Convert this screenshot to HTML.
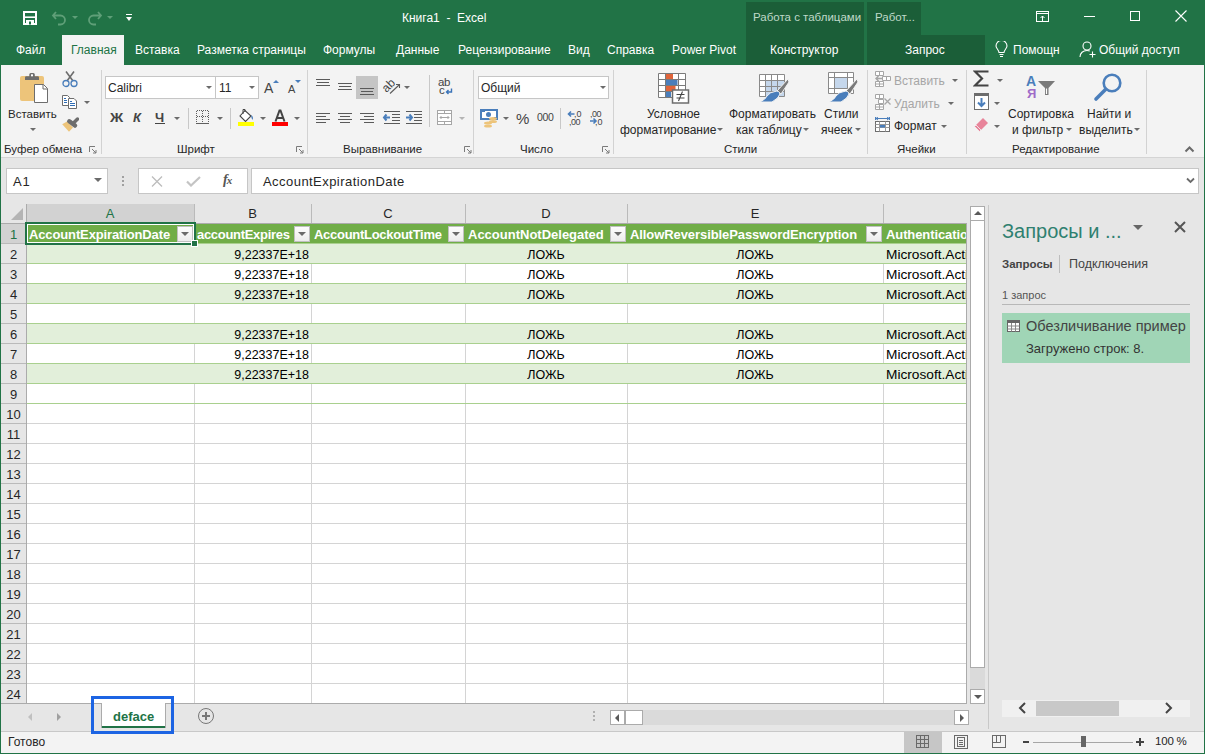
<!DOCTYPE html>
<html><head><meta charset="utf-8">
<style>
*{margin:0;padding:0;box-sizing:border-box}
html,body{width:1205px;height:754px;overflow:hidden;background:#e6e6e6;font-family:"Liberation Sans",sans-serif;position:relative;color:#262626}
.a{position:absolute}
.t{position:absolute;white-space:nowrap;line-height:1}
#title{left:0;top:0;width:1205px;height:65px;background:#217346}
.tab{position:absolute;top:43px;font-size:12px;color:#fff;white-space:nowrap;line-height:14px}
.ctx{position:absolute;background:#1b5e38}
#ribbon{left:1px;top:65px;width:1203px;height:93px;background:#f3f3f3;border-bottom:1px solid #d4d4d4}
#lb{left:0;top:0;width:1px;height:754px;background:#217346}
#rb{left:1204px;top:0;width:1px;height:754px;background:#217346}
#bb{left:0;top:753px;width:1205px;height:1px;background:#217346}
.sep{position:absolute;width:1px;background:#d2d2d2}
.gl{position:absolute;top:142px;font-size:11.5px;color:#262626;white-space:nowrap;line-height:14px}
.rt{position:absolute;font-size:12px;color:#262626;white-space:nowrap;line-height:14px}
.dd{position:absolute;width:0;height:0;border-left:3px solid transparent;border-right:3px solid transparent;border-top:3px solid #6b6b6b}
.box{position:absolute;background:#fff;border:1px solid #c6c6c6}
.hd{font-size:13px;font-weight:bold;color:#fff}
.cl{font-size:12.5px;color:#000}
.fb{position:absolute;width:16px;height:16px;background:linear-gradient(#fdfdfd,#ececec);border:1px solid #c0c0c0}
.fb i{position:absolute;left:3px;top:5px;width:0;height:0;border-left:4px solid transparent;border-right:4px solid transparent;border-top:4px solid #6a6a6a}
</style></head><body>
<div id="title" class="a"></div>
<!-- contextual tabs -->
<div class="ctx" style="left:746px;top:2px;width:118px;height:63px"></div>
<div class="ctx" style="left:867px;top:2px;width:54px;height:33px"></div>
<div class="ctx" style="left:867px;top:35px;width:118px;height:30px"></div>
<div class="t" style="left:753px;top:12px;font-size:11.5px;color:#bfd9c8">Работа с таблицами</div>
<div class="t" style="left:875px;top:12px;font-size:11.5px;color:#bfd9c8">Работ...</div>
<div class="t" style="left:402px;top:12px;font-size:12px;color:#fff">Книга1&nbsp; - &nbsp;Excel</div>
<!-- tabs -->
<div class="a" style="left:62px;top:35px;width:62px;height:30px;background:#f3f3f3"></div>
<div class="tab" style="left:16px">Файл</div>
<div class="tab" style="left:71px;color:#217346">Главная</div>
<div class="tab" style="left:135px">Вставка</div>
<div class="tab" style="left:197px">Разметка страницы</div>
<div class="tab" style="left:323px">Формулы</div>
<div class="tab" style="left:396px">Данные</div>
<div class="tab" style="left:458px">Рецензирование</div>
<div class="tab" style="left:568px">Вид</div>
<div class="tab" style="left:607px">Справка</div>
<div class="tab" style="left:672px">Power Pivot</div>
<div class="tab" style="left:770px">Конструктор</div>
<div class="tab" style="left:905px">Запрос</div>
<div class="tab" style="left:1013px">Помощн</div>
<div class="tab" style="left:1099px">Общий доступ</div>

<div id="ribbon" class="a"></div>
<!-- group separators -->
<div class="sep" style="left:101px;top:70px;height:84px"></div>
<div class="sep" style="left:307px;top:70px;height:84px"></div>
<div class="sep" style="left:473px;top:70px;height:84px"></div>
<div class="sep" style="left:613px;top:70px;height:84px"></div>
<div class="sep" style="left:867px;top:70px;height:84px"></div>
<div class="sep" style="left:966px;top:70px;height:84px"></div>
<div class="sep" style="left:1146px;top:70px;height:84px"></div>
<!-- group labels -->
<div class="gl" style="left:4px">Буфер обмена</div>
<div class="gl" style="left:177px">Шрифт</div>
<div class="gl" style="left:343px">Выравнивание</div>
<div class="gl" style="left:520px">Число</div>
<div class="gl" style="left:724px">Стили</div>
<div class="gl" style="left:897px">Ячейки</div>
<div class="gl" style="left:1012px">Редактирование</div>

<!-- ribbon controls text -->
<div class="rt" style="left:8px;top:107px;font-size:11.5px">Вставить</div>
<div class="box" style="left:105px;top:76px;width:154px;height:23px"></div>
<div class="a" style="left:215px;top:77px;width:1px;height:21px;background:#c6c6c6"></div>
<div class="rt" style="left:108px;top:81px;color:#262626">Calibri</div>
<div class="rt" style="left:219px;top:81px">11</div>
<div class="box" style="left:478px;top:76px;width:131px;height:23px"></div>
<div class="rt" style="left:481px;top:81px">Общий</div>
<div class="rt" style="left:647px;top:107px">Условное</div>
<div class="rt" style="left:620px;top:123px">форматирование</div>
<div class="rt" style="left:729px;top:107px">Форматировать</div>
<div class="rt" style="left:736px;top:123px">как таблицу</div>
<div class="rt" style="left:824px;top:107px">Стили</div>
<div class="rt" style="left:821px;top:123px">ячеек</div>
<div class="rt" style="left:894px;top:74px;color:#a6a6a6">Вставить</div>
<div class="rt" style="left:894px;top:97px;color:#a6a6a6">Удалить</div>
<div class="rt" style="left:894px;top:119px">Формат</div>
<div class="rt" style="left:1008px;top:107px">Сортировка</div>
<div class="rt" style="left:1012px;top:123px">и фильтр</div>
<div class="rt" style="left:1087px;top:107px">Найти и</div>
<div class="rt" style="left:1079px;top:123px">выделить</div>

<!-- formula bar -->
<div class="box" style="left:6px;top:168px;width:102px;height:26px"></div>
<div class="t" style="left:13px;top:175px;font-size:13px;color:#262626;letter-spacing:0.8px">A1</div>
<div class="box" style="left:138px;top:168px;width:110px;height:26px"></div>
<div class="box" style="left:251px;top:168px;width:948px;height:26px"></div>
<div class="t" style="left:263px;top:175px;font-size:13px;color:#262626;letter-spacing:0.45px">AccountExpirationDate</div>

<!--ICONS-->
<!-- QAT -->
<svg class="a" style="left:22px;top:10px" width="16" height="16"><rect x="2" y="2" width="12" height="12" fill="none" stroke="#fff" stroke-width="2"/><path d="M3 7.2H13" stroke="#fff" stroke-width="1.6"/><rect x="4" y="10" width="8" height="5" fill="#fff"/><rect x="7" y="11.5" width="2" height="3" fill="#217346"/></svg>
<svg class="a" style="left:51px;top:10px" width="17" height="16"><path d="M5 2L2 5.5L5 9M2.5 5.5H9.5A4.5 4.5 0 0 1 9.5 14.5H7" fill="none" stroke="#5f9f78" stroke-width="1.8"/></svg>
<div class="dd" style="left:72px;top:16px;border-top-color:#5f9f78"></div>
<svg class="a" style="left:86px;top:10px" width="17" height="16"><path d="M12 2L15 5.5L12 9M14.5 5.5H7.5A4.5 4.5 0 0 0 7.5 14.5H10" fill="none" stroke="#5f9f78" stroke-width="1.8"/></svg>
<div class="dd" style="left:107px;top:16px;border-top-color:#5f9f78"></div>
<div class="a" style="left:126px;top:14px;width:6px;height:1px;background:#fff"></div>
<div class="a" style="left:126px;top:17px;width:0;height:0;border-left:3px solid transparent;border-right:3px solid transparent;border-top:4px solid #fff"></div>
<!-- window buttons -->
<svg class="a" style="left:1035px;top:10px" width="16" height="13"><rect x="1.5" y="1.5" width="12" height="10" fill="none" stroke="#fff"/><path d="M1.5 3.5H13.5" stroke="#fff"/><path d="M7.5 11V6M5.5 8L7.5 6L9.5 8" fill="none" stroke="#fff"/></svg>
<div class="a" style="left:1084px;top:16px;width:11px;height:1px;background:#fff"></div>
<div class="a" style="left:1130px;top:11px;width:10px;height:10px;border:1px solid #fff"></div>
<svg class="a" style="left:1175px;top:10px" width="12" height="12"><path d="M0.5 0.5L11.5 11.5M11.5 0.5L0.5 11.5" stroke="#fff" stroke-width="1.1"/></svg>
<svg class="a" style="left:995px;top:41px" width="13" height="17"><path d="M4 11.5C4 9 1 7.5 1 5A5.5 5.5 0 0 1 12 5C12 7.5 9 9 9 11.5Z" fill="none" stroke="#fff" stroke-width="1.1"/><path d="M4.5 13.5H8.5M5 15.5H8" stroke="#fff" stroke-width="1.1"/></svg>
<svg class="a" style="left:1079px;top:41px" width="18" height="17"><circle cx="8" cy="5" r="4" fill="none" stroke="#fff" stroke-width="1.1"/><path d="M1 16C1 12 4 9.5 8 9.5C9 9.5 10 9.7 10.8 10" fill="none" stroke="#fff" stroke-width="1.1"/><path d="M13.5 10.5V16.5M10.5 13.5H16.5" stroke="#fff" stroke-width="1.1"/></svg>
<!-- clipboard group -->
<svg class="a" style="left:19px;top:72px" width="31" height="32">
<rect x="1" y="4" width="24" height="25" rx="2" fill="#edc47a"/>
<path d="M6 8V5.5Q6 4.3 7.2 4.3H10.3V2.5Q10.3 1 11.8 1H14.3Q15.8 1 15.8 2.5V4.3H18.8Q20 4.3 20 5.5V8Z" fill="#6d6d6d"/>
<rect x="12" y="2.3" width="2" height="2" fill="#fff"/>
<path d="M15.5 12.5H24.5L28.5 16.5V30.5H15.5Z" fill="#fff" stroke="#6d6d6d" stroke-width="1"/>
<path d="M24 12.5V17H28.5" fill="none" stroke="#6d6d6d"/>
</svg>
<div class="dd" style="left:30px;top:128px"></div>
<svg class="a" style="left:62px;top:70px" width="16" height="18"><path d="M4 1.5L11 11M12 1.5L5 11" stroke="#6d6d6d" stroke-width="1.6"/><circle cx="4" cy="13.5" r="3" fill="none" stroke="#4a7ebb" stroke-width="1.3"/><circle cx="12" cy="13.5" r="3" fill="none" stroke="#4a7ebb" stroke-width="1.3"/></svg>
<svg class="a" style="left:61px;top:94px" width="18" height="16"><path d="M1.5 1.5H6.5L8.5 3.5V11.5H1.5Z" fill="#fff" stroke="#6d6d6d"/><path d="M3 4.5H5M3 6.5H6M3 8.5H6" stroke="#2f6db5"/><path d="M7.5 4.5H13L15.5 7V14.5H7.5Z" fill="#fff" stroke="#6d6d6d"/><path d="M9 7.5H11M9 9.5H14M9 11.5H14" stroke="#2f6db5"/></svg>
<div class="dd" style="left:84px;top:101px"></div>
<svg class="a" style="left:62px;top:117px" width="17" height="16"><path d="M0.2 7.3L5 4.5L11 10.5L7 14.8Z" fill="#edc47a"/><path d="M7.3 4.3L13 8.5" stroke="#6d6d6d" stroke-width="4.5" stroke-linecap="round"/><path d="M12.5 5L15.5 2" stroke="#6d6d6d" stroke-width="3.5" stroke-linecap="round"/></svg>
<svg class="a" style="left:89px;top:146px" width="8" height="8"><path d="M0.5 6V0.5H6" fill="none" stroke="#7a7a7a"/><path d="M3 3L7 7M7 4V7H4" fill="none" stroke="#7a7a7a"/></svg>
<!-- font group -->
<div class="dd" style="left:206px;top:86px"></div>
<div class="dd" style="left:249px;top:86px"></div>
<div class="t" style="left:264px;top:81px;font-size:14px;color:#444">A</div>
<div class="a" style="left:273px;top:80px;width:0;height:0;border-left:3px solid transparent;border-right:3px solid transparent;border-bottom:3px solid #4a7ebb"></div>
<div class="t" style="left:288px;top:84px;font-size:11px;color:#444">A</div>
<div class="a" style="left:295px;top:80px;width:0;height:0;border-left:3px solid transparent;border-right:3px solid transparent;border-top:3px solid #4a7ebb"></div>
<div class="t" style="left:110px;top:111px;font-size:13.5px;font-weight:bold;color:#444;transform:scaleX(1.08);transform-origin:left">Ж</div>
<div class="t" style="left:133px;top:111px;font-size:13px;font-weight:bold;font-style:italic;color:#444">К</div>
<div class="t" style="left:155px;top:111px;font-size:13px;font-weight:bold;color:#444">Ч</div>
<div class="a" style="left:155px;top:123px;width:10px;height:1px;background:#444"></div>
<div class="dd" style="left:174px;top:117px"></div>
<div class="sep" style="left:188px;top:108px;height:21px;background:#c8c8c8"></div>
<svg class="a" style="left:196px;top:110px" width="14" height="15"><path d="M0.5 1V13M6.5 1V13M12.5 1V13M1 0.5H13M1 6.5H13" stroke="#5f5f5f" stroke-dasharray="1 1" fill="none"/><path d="M0 13.5H13" stroke="#5f5f5f"/></svg>
<div class="dd" style="left:217px;top:117px"></div>
<div class="sep" style="left:230px;top:108px;height:21px;background:#c8c8c8"></div>
<svg class="a" style="left:238px;top:108px" width="17" height="18"><path d="M7 2.5L2 8L7.5 13.5L13 8Z" fill="#fff" stroke="#444" stroke-width="1.1"/><path d="M5 6V1.5H7V4" fill="none" stroke="#444"/><path d="M13 7Q16 9 14.5 12L13.5 10Z" fill="#4a7ebb"/><rect x="0" y="14" width="16" height="4" fill="#ffff00"/></svg>
<div class="dd" style="left:260px;top:117px"></div>
<svg class="a" style="left:272px;top:108px" width="17" height="18"><path d="M3.5 13.5L7.5 2.5H8.5L12.5 13.5M5 10H11" fill="none" stroke="#444" stroke-width="2"/><rect x="0" y="14" width="16" height="4" fill="#ff0000"/></svg>
<div class="dd" style="left:294px;top:117px"></div>
<svg class="a" style="left:296px;top:146px" width="8" height="8"><path d="M0.5 6V0.5H6" fill="none" stroke="#7a7a7a"/><path d="M3 3L7 7M7 4V7H4" fill="none" stroke="#7a7a7a"/></svg>
<!-- alignment group -->
<svg class="a" style="left:310px;top:72px" width="160" height="60">
<g stroke="#5a5a5a" stroke-width="1" fill="none">
<path d="M6 7.5H20M7 10.5H19M6 13.5H20"/>
<path d="M28 11.5H42M29 14.5H41M28 17.5H42"/>
</g>
<rect x="46" y="4" width="22" height="23" fill="#c5c5c5"/>
<g stroke="#5a5a5a" stroke-width="1" fill="none">
<path d="M50 16.5H64M51 19.5H63M50 22.5H64"/>
<path d="M6 41.5H20M6 44.5H16M6 47.5H20M6 50.5H16"/>
<path d="M28 41.5H42M30 44.5H40M28 47.5H42M30 50.5H40"/>
<path d="M50 41.5H64M54 44.5H64M50 47.5H64M54 50.5H64"/>
<path d="M74 39.5H90M82 42.5H90M82 45.5H90M82 48.5H90M74 51.5H90"/>
<path d="M96 39.5H112M104 42.5H112M104 45.5H112M104 48.5H112M96 51.5H112"/>
<path d="M80 21.5L89 13" stroke-width="1.1"/>
</g>
<path d="M86 12.5L89.5 12.5L89.5 16" fill="none" stroke="#5a5a5a" stroke-width="1.1"/>
<path d="M74 45.5H80M76.5 42.5L74 45.5L76.5 48.5" stroke="#4a7ebb" stroke-width="2" fill="none"/>
<path d="M96 45.5H102M99.5 42.5L102 45.5L99.5 48.5" stroke="#4a7ebb" stroke-width="2" fill="none"/>
<g transform="translate(76.5,21) rotate(-45)"><text x="0" y="0" font-family="Liberation Sans" font-size="12" fill="#444">ab</text></g>
</svg>
<div class="dd" style="left:404px;top:86px"></div>
<div class="sep" style="left:429px;top:75px;height:52px;background:#c8c8c8"></div>
<div class="t" style="left:438px;top:77px;font-size:11.5px;color:#444;letter-spacing:-0.3px">ab</div>
<div class="t" style="left:439px;top:85px;font-size:11.5px;color:#444">c</div>
<svg class="a" style="left:445px;top:88px" width="8" height="7"><path d="M6.5 0.5V4H1.5M3.5 2L1.5 4L3.5 6" fill="none" stroke="#3a73b8" stroke-width="1.4"/></svg>
<svg class="a" style="left:437px;top:110px" width="16" height="16"><rect x="0.5" y="0.5" width="14" height="14" fill="#fff" stroke="#a6a6a6"/><path d="M0.5 3.5H14.5M0.5 11.5H14.5M7.5 0.5V3.5M7.5 11.5V14.5M3 7.5H12M4.5 6L3 7.5L4.5 9M10.5 6L12 7.5L10.5 9" fill="none" stroke="#a6a6a6"/></svg>
<div class="dd" style="left:459px;top:117px;border-top-color:#b4b4b4"></div>
<svg class="a" style="left:464px;top:146px" width="8" height="8"><path d="M0.5 6V0.5H6" fill="none" stroke="#7a7a7a"/><path d="M3 3L7 7M7 4V7H4" fill="none" stroke="#7a7a7a"/></svg>
<!-- number group -->
<div class="dd" style="left:600px;top:86px"></div>
<svg class="a" style="left:480px;top:109px" width="19" height="19"><rect x="1" y="1" width="16" height="9" fill="#fff" stroke="#4a7ebb" stroke-width="2"/><circle cx="8.5" cy="5.5" r="2.5" fill="#4a7ebb"/><path d="M2 2.5H5M14 8.5H16" stroke="#4a7ebb"/><ellipse cx="13" cy="9.5" rx="4" ry="1.6" fill="#edc47a"/><ellipse cx="13" cy="12.5" rx="4" ry="1.6" fill="#edc47a"/><ellipse cx="8" cy="14" rx="4" ry="1.6" fill="#edc47a"/><ellipse cx="8" cy="17" rx="4" ry="1.6" fill="#edc47a"/></svg>
<div class="dd" style="left:503px;top:117px"></div>
<div class="t" style="left:516px;top:111px;font-size:15px;color:#444">%</div>
<div class="t" style="left:537px;top:112px;font-size:10.5px;color:#444;letter-spacing:-0.3px">000</div>
<div class="sep" style="left:560px;top:108px;height:21px;background:#c8c8c8"></div>
<svg class="a" style="left:567px;top:109px" width="40" height="18"><path d="M1.5 5H7.5M4 2.5L1.5 5L4 7.5" fill="none" stroke="#4a7ebb" stroke-width="1.6"/><path d="M23 12H29M26.5 9.5L29 12L26.5 14.5" fill="none" stroke="#4a7ebb" stroke-width="1.6"/>
<text x="7" y="8" font-family="Liberation Sans" font-size="9" fill="#444">,0</text>
<text x="2" y="16" font-family="Liberation Sans" font-size="9" fill="#444" letter-spacing="-0.5">,00</text>
<text x="23" y="8" font-family="Liberation Sans" font-size="9" fill="#444" letter-spacing="-0.5">,00</text>
<text x="28" y="16" font-family="Liberation Sans" font-size="9" fill="#444">,0</text></svg>
<svg class="a" style="left:602px;top:146px" width="8" height="8"><path d="M0.5 6V0.5H6" fill="none" stroke="#7a7a7a"/><path d="M3 3L7 7M7 4V7H4" fill="none" stroke="#7a7a7a"/></svg>
<!-- styles group -->
<svg class="a" style="left:657px;top:72px" width="33" height="32">
<rect x="1.5" y="1.5" width="27" height="24" fill="#fff"/>
<rect x="9" y="2" width="7" height="5.5" fill="#e0643a"/>
<rect x="9" y="8" width="11.5" height="5.5" fill="#4a7ebb"/>
<rect x="9" y="14" width="9.5" height="5.5" fill="#e0643a"/>
<rect x="9" y="20" width="5" height="5.5" fill="#4a7ebb"/>
<path d="M1.5 1.5H28.5V25.5H1.5Z M8.5 1.5V25.5M21.5 1.5V25.5M1.5 7.5H28.5M1.5 13.5H28.5M1.5 19.5H28.5" fill="none" stroke="#7a7a7a"/>
<rect x="15.5" y="18" width="16" height="13" fill="#fff" stroke="#6d6d6d" stroke-width="1.5"/>
<path d="M19.5 22.5H27.5M19.5 26H27.5M25.5 19.5L21.5 29" stroke="#444" stroke-width="1.1"/>
</svg>
<svg class="a" style="left:758px;top:73px" width="32" height="31">
<rect x="1.5" y="1.5" width="25" height="22" fill="#fff"/>
<rect x="7" y="8" width="19.5" height="15.5" fill="#c5d7ec"/>
<path d="M1.5 1.5H26.5V23.5H1.5Z M7.5 1.5V23.5M13.5 1.5V23.5M19.5 1.5V23.5M1.5 7.5H26.5M1.5 13.5H26.5M1.5 18.5H26.5" fill="none" stroke="#8a8a8a"/>
<path d="M30 6L31 9L23 21L19 18Z" fill="#7a7a7a" stroke="#f3f3f3" stroke-width="1"/>
<path d="M17 18.5Q21 17 22 21Q21 25 14 29H2Q8 26 9 23Q12 19 17 18.5Z" fill="#4a7ebb" stroke="#f3f3f3" stroke-width="1"/>
</svg>
<svg class="a" style="left:827px;top:71px" width="32" height="33">
<rect x="1.5" y="1.5" width="25" height="21" fill="#fff"/>
<rect x="7.5" y="7" width="13" height="10" fill="#c5d7ec"/>
<path d="M1.5 1.5H26.5V22.5H1.5Z M7.5 1.5V22.5M20.5 1.5V22.5M1.5 6.5H26.5M1.5 17.5H26.5" fill="none" stroke="#8a8a8a"/>
<path d="M30 8L31 11L23 23L19 20Z" fill="#7a7a7a" stroke="#f3f3f3" stroke-width="1"/>
<path d="M17 20.5Q21 19 22 23Q21 27 14 31H2Q8 28 9 25Q12 21 17 20.5Z" fill="#4a7ebb" stroke="#f3f3f3" stroke-width="1"/>
</svg>
<div class="dd" style="left:717px;top:128px"></div>
<div class="dd" style="left:803px;top:128px"></div>
<div class="dd" style="left:855px;top:128px"></div>
<!-- cells group -->
<svg class="a" style="left:875px;top:71px" width="17" height="17"><g fill="#fff" stroke="#a6a6a6" stroke-width="1"><path d="M0.5 0.5H8.5V4.5H0.5ZM4.5 0.5V4.5"/><path d="M0.5 10.5H8.5V15.5H0.5ZM0.5 13H8.5M4.5 10.5V15.5"/><path d="M7.5 5.5H15.5V9.5H7.5ZM11.5 5.5V9.5"/></g><path d="M1 7.5H7M3.5 5L1 7.5L3.5 10" fill="none" stroke="#a6a6a6" stroke-width="1.5"/></svg>
<div class="dd" style="left:952px;top:79px;border-top-color:#6b6b6b"></div>
<svg class="a" style="left:875px;top:94px" width="17" height="17"><g fill="#fff" stroke="#a6a6a6" stroke-width="1"><path d="M0.5 0.5H8.5V4.5H0.5ZM4.5 0.5V4.5"/><path d="M0.5 10.5H8.5V15.5H0.5ZM0.5 13H8.5M4.5 10.5V15.5"/><path d="M3.5 5.5H8.5V9.5H3.5Z"/></g><path d="M9.5 4.5L15.5 10.5M15.5 4.5L9.5 10.5" stroke="#a6a6a6" stroke-width="1.3"/></svg>
<div class="dd" style="left:948px;top:102px;border-top-color:#6b6b6b"></div>
<svg class="a" style="left:875px;top:117px" width="16" height="16"><path d="M0.5 0V3M14.5 0V3M1 1.5H14M3 0L1 1.5L3 3M12 0L14 1.5L12 3" fill="none" stroke="#4a7ebb"/><rect x="0.5" y="4.5" width="14" height="10" fill="#fff" stroke="#6d6d6d"/><path d="M0.5 7.5H14.5M0.5 10.5H14.5M4.5 4.5V14.5M10.5 4.5V14.5" stroke="#9a9a9a"/><rect x="5" y="8" width="5" height="2.5" fill="#4a7ebb"/></svg>
<div class="dd" style="left:941px;top:125px"></div>
<!-- editing group -->
<svg class="a" style="left:973px;top:70px" width="17" height="17"><path d="M15.5 1.5H2L9 8.5L2 15.5H15.5" fill="none" stroke="#444" stroke-width="2.2"/></svg>
<div class="dd" style="left:997px;top:79px"></div>
<svg class="a" style="left:974px;top:93px" width="16" height="18"><rect x="0.5" y="0.5" width="14" height="16" fill="#fff" stroke="#6d6d6d"/><rect x="0" y="0" width="15" height="3" fill="#6d6d6d"/><path d="M7.5 5V13M4 9.5L7.5 13L11 9.5" fill="none" stroke="#4a7ebb" stroke-width="2"/></svg>
<div class="dd" style="left:994px;top:102px"></div>
<svg class="a" style="left:974px;top:117px" width="16" height="16"><path d="M9 1L14 6L7 13L2 8Z" fill="#e8849a"/><path d="M2 8L7 13L5.5 14.5L0.5 9.5Z" fill="#e8849a" stroke="#f3f3f3" stroke-width="0.8"/></svg>
<div class="dd" style="left:994px;top:125px"></div>
<div class="t" style="left:1026px;top:74px;font-size:14px;font-weight:bold;color:#4a7ebb">A</div>
<div class="t" style="left:1027px;top:87px;font-size:13px;font-weight:bold;color:#9f6bc8">Я</div>
<svg class="a" style="left:1037px;top:80px" width="20" height="17"><path d="M1 1H18L11.5 8V15H8V8Z" fill="#7a7a7a"/><path d="M9.5 8.5V14" stroke="#fff" stroke-width="1.2"/></svg>
<svg class="a" style="left:1093px;top:72px" width="31" height="30"><circle cx="19" cy="11" r="8.3" fill="none" stroke="#4a7ebb" stroke-width="2.6"/><path d="M12.5 17.5L3 27" stroke="#4a7ebb" stroke-width="3.6" stroke-linecap="round"/></svg>
<div class="dd" style="left:1066px;top:128px"></div>
<div class="dd" style="left:1134px;top:128px"></div>
<svg class="a" style="left:1184px;top:145px" width="12" height="8"><path d="M1.5 6.5L5.5 2.5L9.5 6.5" fill="none" stroke="#6a6a6a" stroke-width="2"/></svg>
<!-- formula bar icons -->
<div class="a" style="left:94px;top:178px;width:0;height:0;border-left:4px solid transparent;border-right:4px solid transparent;border-top:4px solid #6b6b6b"></div>
<div class="a" style="left:122px;top:176px;width:2px;height:2px;background:#a0a0a0;box-shadow:0 4px 0 #a0a0a0,0 8px 0 #a0a0a0"></div>
<svg class="a" style="left:151px;top:176px" width="12" height="11"><path d="M1 0.5L11 10.5M11 0.5L1 10.5" stroke="#bdbdbd" stroke-width="1.3"/></svg>
<svg class="a" style="left:186px;top:176px" width="15" height="11"><path d="M1 5.5L5 9.5L14 1" fill="none" stroke="#c4c4c4" stroke-width="2.2"/></svg>
<div class="t" style="left:223px;top:173px;font-family:'Liberation Serif',serif;font-style:italic;font-weight:bold;font-size:14px;color:#555">f<span style="font-size:11px;position:relative;left:-1px">x</span></div>
<svg class="a" style="left:1186px;top:177px" width="9" height="7"><path d="M1 1.5L4.5 5L8 1.5" fill="none" stroke="#6b6b6b" stroke-width="1.8"/></svg>

<!--/ICONS-->
<!--GRID-->
<div class="a" style="left:27px;top:224px;width:939px;height:479px;background:#fff;"></div>
<div class="a" style="left:27px;top:204px;width:167px;height:19px;background:#d2d2d2;"></div>
<div class="a" style="left:194px;top:204px;width:1px;height:19px;background:#bababa;"></div>
<div class="a" style="left:311px;top:204px;width:1px;height:19px;background:#bababa;"></div>
<div class="a" style="left:465px;top:204px;width:1px;height:19px;background:#bababa;"></div>
<div class="a" style="left:627px;top:204px;width:1px;height:19px;background:#bababa;"></div>
<div class="a" style="left:883px;top:204px;width:1px;height:19px;background:#bababa;"></div>
<div class="a" style="left:1px;top:223px;width:965px;height:1px;background:#ababab;"></div>
<div class="a" style="left:1px;top:224px;width:25px;height:19px;background:#d2d2d2;"></div>
<div class="a" style="left:26px;top:204px;width:1px;height:499px;background:#ababab;"></div>
<div class="a" style="left:1px;top:243px;width:25px;height:1px;background:#bababa;"></div>
<div class="a" style="left:1px;top:263px;width:25px;height:1px;background:#bababa;"></div>
<div class="a" style="left:1px;top:283px;width:25px;height:1px;background:#bababa;"></div>
<div class="a" style="left:1px;top:303px;width:25px;height:1px;background:#bababa;"></div>
<div class="a" style="left:1px;top:323px;width:25px;height:1px;background:#bababa;"></div>
<div class="a" style="left:1px;top:343px;width:25px;height:1px;background:#bababa;"></div>
<div class="a" style="left:1px;top:363px;width:25px;height:1px;background:#bababa;"></div>
<div class="a" style="left:1px;top:383px;width:25px;height:1px;background:#bababa;"></div>
<div class="a" style="left:1px;top:403px;width:25px;height:1px;background:#bababa;"></div>
<div class="a" style="left:1px;top:423px;width:25px;height:1px;background:#bababa;"></div>
<div class="a" style="left:1px;top:443px;width:25px;height:1px;background:#bababa;"></div>
<div class="a" style="left:1px;top:463px;width:25px;height:1px;background:#bababa;"></div>
<div class="a" style="left:1px;top:483px;width:25px;height:1px;background:#bababa;"></div>
<div class="a" style="left:1px;top:503px;width:25px;height:1px;background:#bababa;"></div>
<div class="a" style="left:1px;top:523px;width:25px;height:1px;background:#bababa;"></div>
<div class="a" style="left:1px;top:543px;width:25px;height:1px;background:#bababa;"></div>
<div class="a" style="left:1px;top:563px;width:25px;height:1px;background:#bababa;"></div>
<div class="a" style="left:1px;top:583px;width:25px;height:1px;background:#bababa;"></div>
<div class="a" style="left:1px;top:603px;width:25px;height:1px;background:#bababa;"></div>
<div class="a" style="left:1px;top:623px;width:25px;height:1px;background:#bababa;"></div>
<div class="a" style="left:1px;top:643px;width:25px;height:1px;background:#bababa;"></div>
<div class="a" style="left:1px;top:663px;width:25px;height:1px;background:#bababa;"></div>
<div class="a" style="left:1px;top:683px;width:25px;height:1px;background:#bababa;"></div>
<div class="a" style="left:1px;top:703px;width:25px;height:1px;background:#bababa;"></div>
<div class="a" style="left:194px;top:224px;width:1px;height:479px;background:#d4d4d4;"></div>
<div class="a" style="left:311px;top:224px;width:1px;height:479px;background:#d4d4d4;"></div>
<div class="a" style="left:465px;top:224px;width:1px;height:479px;background:#d4d4d4;"></div>
<div class="a" style="left:627px;top:224px;width:1px;height:479px;background:#d4d4d4;"></div>
<div class="a" style="left:883px;top:224px;width:1px;height:479px;background:#d4d4d4;"></div>
<div class="a" style="left:27px;top:243px;width:939px;height:1px;background:#d4d4d4;"></div>
<div class="a" style="left:27px;top:263px;width:939px;height:1px;background:#d4d4d4;"></div>
<div class="a" style="left:27px;top:283px;width:939px;height:1px;background:#d4d4d4;"></div>
<div class="a" style="left:27px;top:303px;width:939px;height:1px;background:#d4d4d4;"></div>
<div class="a" style="left:27px;top:323px;width:939px;height:1px;background:#d4d4d4;"></div>
<div class="a" style="left:27px;top:343px;width:939px;height:1px;background:#d4d4d4;"></div>
<div class="a" style="left:27px;top:363px;width:939px;height:1px;background:#d4d4d4;"></div>
<div class="a" style="left:27px;top:383px;width:939px;height:1px;background:#d4d4d4;"></div>
<div class="a" style="left:27px;top:403px;width:939px;height:1px;background:#d4d4d4;"></div>
<div class="a" style="left:27px;top:423px;width:939px;height:1px;background:#d4d4d4;"></div>
<div class="a" style="left:27px;top:443px;width:939px;height:1px;background:#d4d4d4;"></div>
<div class="a" style="left:27px;top:463px;width:939px;height:1px;background:#d4d4d4;"></div>
<div class="a" style="left:27px;top:483px;width:939px;height:1px;background:#d4d4d4;"></div>
<div class="a" style="left:27px;top:503px;width:939px;height:1px;background:#d4d4d4;"></div>
<div class="a" style="left:27px;top:523px;width:939px;height:1px;background:#d4d4d4;"></div>
<div class="a" style="left:27px;top:543px;width:939px;height:1px;background:#d4d4d4;"></div>
<div class="a" style="left:27px;top:563px;width:939px;height:1px;background:#d4d4d4;"></div>
<div class="a" style="left:27px;top:583px;width:939px;height:1px;background:#d4d4d4;"></div>
<div class="a" style="left:27px;top:603px;width:939px;height:1px;background:#d4d4d4;"></div>
<div class="a" style="left:27px;top:623px;width:939px;height:1px;background:#d4d4d4;"></div>
<div class="a" style="left:27px;top:643px;width:939px;height:1px;background:#d4d4d4;"></div>
<div class="a" style="left:27px;top:663px;width:939px;height:1px;background:#d4d4d4;"></div>
<div class="a" style="left:27px;top:683px;width:939px;height:1px;background:#d4d4d4;"></div>
<div class="a" style="left:27px;top:703px;width:939px;height:1px;background:#d4d4d4;"></div>
<div class="a" style="left:27px;top:224px;width:939px;height:19px;background:#70ad47;"></div>
<div class="a" style="left:27px;top:244px;width:939px;height:19px;background:#e2efda;"></div>
<div class="a" style="left:27px;top:284px;width:939px;height:19px;background:#e2efda;"></div>
<div class="a" style="left:27px;top:324px;width:939px;height:19px;background:#e2efda;"></div>
<div class="a" style="left:27px;top:364px;width:939px;height:19px;background:#e2efda;"></div>
<div class="a" style="left:27px;top:243px;width:939px;height:1px;background:#a9d08e;"></div>
<div class="a" style="left:27px;top:263px;width:939px;height:1px;background:#a9d08e;"></div>
<div class="a" style="left:27px;top:283px;width:939px;height:1px;background:#a9d08e;"></div>
<div class="a" style="left:27px;top:303px;width:939px;height:1px;background:#a9d08e;"></div>
<div class="a" style="left:27px;top:323px;width:939px;height:1px;background:#a9d08e;"></div>
<div class="a" style="left:27px;top:343px;width:939px;height:1px;background:#a9d08e;"></div>
<div class="a" style="left:27px;top:363px;width:939px;height:1px;background:#a9d08e;"></div>
<div class="a" style="left:27px;top:383px;width:939px;height:1px;background:#a9d08e;"></div>
<div class="a" style="left:27px;top:403px;width:939px;height:1px;background:#a9d08e;"></div>
<div class="t" style="left:26px;width:168px;top:207px;font-size:13px;text-align:center;color:#217346">A</div>
<div class="t" style="left:194px;width:117px;top:207px;font-size:13px;text-align:center;color:#262626">B</div>
<div class="t" style="left:311px;width:154px;top:207px;font-size:13px;text-align:center;color:#262626">C</div>
<div class="t" style="left:465px;width:162px;top:207px;font-size:13px;text-align:center;color:#262626">D</div>
<div class="t" style="left:627px;width:256px;top:207px;font-size:13px;text-align:center;color:#262626">E</div>
<div class="t" style="left:1px;width:25px;top:228px;font-size:13px;text-align:center;color:#217346">1</div>
<div class="t" style="left:1px;width:25px;top:248px;font-size:13px;text-align:center;color:#262626">2</div>
<div class="t" style="left:1px;width:25px;top:268px;font-size:13px;text-align:center;color:#262626">3</div>
<div class="t" style="left:1px;width:25px;top:288px;font-size:13px;text-align:center;color:#262626">4</div>
<div class="t" style="left:1px;width:25px;top:308px;font-size:13px;text-align:center;color:#262626">5</div>
<div class="t" style="left:1px;width:25px;top:328px;font-size:13px;text-align:center;color:#262626">6</div>
<div class="t" style="left:1px;width:25px;top:348px;font-size:13px;text-align:center;color:#262626">7</div>
<div class="t" style="left:1px;width:25px;top:368px;font-size:13px;text-align:center;color:#262626">8</div>
<div class="t" style="left:1px;width:25px;top:388px;font-size:13px;text-align:center;color:#262626">9</div>
<div class="t" style="left:1px;width:25px;top:408px;font-size:13px;text-align:center;color:#262626">10</div>
<div class="t" style="left:1px;width:25px;top:428px;font-size:13px;text-align:center;color:#262626">11</div>
<div class="t" style="left:1px;width:25px;top:448px;font-size:13px;text-align:center;color:#262626">12</div>
<div class="t" style="left:1px;width:25px;top:468px;font-size:13px;text-align:center;color:#262626">13</div>
<div class="t" style="left:1px;width:25px;top:488px;font-size:13px;text-align:center;color:#262626">14</div>
<div class="t" style="left:1px;width:25px;top:508px;font-size:13px;text-align:center;color:#262626">15</div>
<div class="t" style="left:1px;width:25px;top:528px;font-size:13px;text-align:center;color:#262626">16</div>
<div class="t" style="left:1px;width:25px;top:548px;font-size:13px;text-align:center;color:#262626">17</div>
<div class="t" style="left:1px;width:25px;top:568px;font-size:13px;text-align:center;color:#262626">18</div>
<div class="t" style="left:1px;width:25px;top:588px;font-size:13px;text-align:center;color:#262626">19</div>
<div class="t" style="left:1px;width:25px;top:608px;font-size:13px;text-align:center;color:#262626">20</div>
<div class="t" style="left:1px;width:25px;top:628px;font-size:13px;text-align:center;color:#262626">21</div>
<div class="t" style="left:1px;width:25px;top:648px;font-size:13px;text-align:center;color:#262626">22</div>
<div class="t" style="left:1px;width:25px;top:668px;font-size:13px;text-align:center;color:#262626">23</div>
<div class="t" style="left:1px;width:25px;top:688px;font-size:13px;text-align:center;color:#262626">24</div>
<div class="a" style="left:27px;top:224px;width:939px;height:479px;overflow:hidden">
<div class="t hd" style="left:2px;top:4px;letter-spacing:-0.13px">AccountExpirationDate</div>
<div class="fb" style="left:150px;top:2px"><i></i></div>
<div class="t hd" style="left:170px;top:4px;letter-spacing:-0.3px">accountExpires</div>
<div class="fb" style="left:267px;top:2px"><i></i></div>
<div class="t hd" style="left:287px;top:4px;letter-spacing:-0.28px">AccountLockoutTime</div>
<div class="fb" style="left:421px;top:2px"><i></i></div>
<div class="t hd" style="left:441px;top:4px;letter-spacing:0px">AccountNotDelegated</div>
<div class="fb" style="left:583px;top:2px"><i></i></div>
<div class="t hd" style="left:603px;top:4px;letter-spacing:-0.08px">AllowReversiblePasswordEncryption</div>
<div class="fb" style="left:839px;top:2px"><i></i></div>
<div class="t hd" style="left:859px;top:4px;letter-spacing:-0.1px">Authentication</div>
<div class="t cl" style="left:167px;width:115px;top:25px;text-align:right">9,22337E+18</div>
<div class="t cl" style="left:438px;width:162px;top:25px;text-align:center">ЛОЖЬ</div>
<div class="t cl" style="left:600px;width:256px;top:25px;text-align:center">ЛОЖЬ</div>
<div class="t cl" style="left:859px;top:24px;font-size:13.7px">Microsoft.ActiveDirectory</div>
<div class="t cl" style="left:167px;width:115px;top:45px;text-align:right">9,22337E+18</div>
<div class="t cl" style="left:438px;width:162px;top:45px;text-align:center">ЛОЖЬ</div>
<div class="t cl" style="left:600px;width:256px;top:45px;text-align:center">ЛОЖЬ</div>
<div class="t cl" style="left:859px;top:44px;font-size:13.7px">Microsoft.ActiveDirectory</div>
<div class="t cl" style="left:167px;width:115px;top:65px;text-align:right">9,22337E+18</div>
<div class="t cl" style="left:438px;width:162px;top:65px;text-align:center">ЛОЖЬ</div>
<div class="t cl" style="left:600px;width:256px;top:65px;text-align:center">ЛОЖЬ</div>
<div class="t cl" style="left:859px;top:64px;font-size:13.7px">Microsoft.ActiveDirectory</div>
<div class="t cl" style="left:167px;width:115px;top:105px;text-align:right">9,22337E+18</div>
<div class="t cl" style="left:438px;width:162px;top:105px;text-align:center">ЛОЖЬ</div>
<div class="t cl" style="left:600px;width:256px;top:105px;text-align:center">ЛОЖЬ</div>
<div class="t cl" style="left:859px;top:104px;font-size:13.7px">Microsoft.ActiveDirectory</div>
<div class="t cl" style="left:167px;width:115px;top:125px;text-align:right">9,22337E+18</div>
<div class="t cl" style="left:438px;width:162px;top:125px;text-align:center">ЛОЖЬ</div>
<div class="t cl" style="left:600px;width:256px;top:125px;text-align:center">ЛОЖЬ</div>
<div class="t cl" style="left:859px;top:124px;font-size:13.7px">Microsoft.ActiveDirectory</div>
<div class="t cl" style="left:167px;width:115px;top:145px;text-align:right">9,22337E+18</div>
<div class="t cl" style="left:438px;width:162px;top:145px;text-align:center">ЛОЖЬ</div>
<div class="t cl" style="left:600px;width:256px;top:145px;text-align:center">ЛОЖЬ</div>
<div class="t cl" style="left:859px;top:144px;font-size:13.7px">Microsoft.ActiveDirectory</div>
</div>
<svg class="a" style="left:10px;top:207px" width="14" height="14"><path d="M13 1 L13 13 L1 13 Z" fill="#b4b4b4"/></svg>
<div class="a" style="left:25px;top:222px;width:171px;height:23px;border:2px solid #217346"></div>
<div class="a" style="left:27px;top:224px;width:167px;height:19px;border:1px solid #fff"></div>
<div class="a" style="left:191px;top:240px;width:7px;height:7px;background:#217346;border:1px solid #fff"></div>
<!--/GRID-->
<!--BOTTOM-->
<!-- vertical scrollbar -->
<div class="a" style="left:967px;top:204px;width:21px;height:499px;background:#e6e6e6"></div>
<div class="a" style="left:970px;top:206px;width:15px;height:15px;background:#fff;border:1px solid #ababab"></div>
<div class="a" style="left:974px;top:211px;width:0;height:0;border-left:4px solid transparent;border-right:4px solid transparent;border-bottom:4px solid #5a5a5a"></div>
<div class="a" style="left:970px;top:668px;width:15px;height:21px;background:#dadada"></div>
<div class="a" style="left:970px;top:220px;width:15px;height:448px;background:#fff;border:1px solid #ababab"></div>
<div class="a" style="left:966px;top:223px;width:1px;height:481px;background:#ababab"></div>
<div class="a" style="left:970px;top:689px;width:15px;height:15px;background:#fff;border:1px solid #ababab"></div>
<div class="a" style="left:974px;top:695px;width:0;height:0;border-left:4px solid transparent;border-right:4px solid transparent;border-top:4px solid #5a5a5a"></div>
<!-- pane splitter -->
<div class="a" style="left:988px;top:205px;width:1px;height:524px;background:#c8c8c8"></div>
<!-- sheet tab bar -->
<div class="a" style="left:1px;top:703px;width:966px;height:1px;background:#ababab"></div>
<div class="a" style="left:28px;top:713px;width:0;height:0;border-top:4px solid transparent;border-bottom:4px solid transparent;border-right:4px solid #c0c0c0"></div>
<div class="a" style="left:57px;top:713px;width:0;height:0;border-top:4px solid transparent;border-bottom:4px solid transparent;border-left:4px solid #a0a0a0"></div>
<div class="a" style="left:101px;top:703px;width:65px;height:25px;background:#fff;border-left:1px solid #ababab;border-right:1px solid #ababab"></div>
<div class="a" style="left:102px;top:726px;width:63px;height:2px;background:#217346"></div>
<div class="t" style="left:113px;top:710px;font-size:13px;font-weight:bold;color:#217346">deface</div>
<div class="a" style="left:198px;top:708px;width:16px;height:16px;border:1.5px solid #777;border-radius:50%"></div>
<div class="a" style="left:202px;top:715px;width:8px;height:2px;background:#777"></div>
<div class="a" style="left:205px;top:712px;width:2px;height:8px;background:#777"></div>
<!-- h scrollbar -->
<div class="a" style="left:593px;top:711px;width:2px;height:2px;background:#b0b0b0;box-shadow:0 4px 0 #b0b0b0,0 8px 0 #b0b0b0"></div>
<div class="a" style="left:610px;top:710px;width:359px;height:15px;background:#dadada"></div>
<div class="a" style="left:610px;top:710px;width:15px;height:15px;background:#fff;border:1px solid #ababab"></div>
<div class="a" style="left:615px;top:714px;width:0;height:0;border-top:4px solid transparent;border-bottom:4px solid transparent;border-right:4px solid #5a5a5a"></div>
<div class="a" style="left:625px;top:710px;width:18px;height:15px;background:#fff;border:1px solid #ababab"></div>
<div class="a" style="left:954px;top:710px;width:15px;height:15px;background:#fff;border:1px solid #ababab"></div>
<div class="a" style="left:960px;top:714px;width:0;height:0;border-top:4px solid transparent;border-bottom:4px solid transparent;border-left:4px solid #5a5a5a"></div>
<!-- status bar -->
<div class="a" style="left:1px;top:731px;width:1203px;height:22px;background:#f3f3f3;border-top:1px solid #c8c8c8"></div>
<div class="t" style="left:8px;top:736px;font-size:12px;color:#262626">Готово</div>
<div class="a" style="left:904px;top:732px;width:38px;height:21px;background:#c6c6c6"></div>
<svg class="a" style="left:915px;top:734px" width="16" height="16"><g fill="none" stroke="#6a6a6a" stroke-width="1"><rect x="1.5" y="1.5" width="12" height="12"/><path d="M5.5 1.5V13.5M9.5 1.5V13.5M1.5 5.5H13.5M1.5 9.5H13.5"/></g></svg>
<svg class="a" style="left:953px;top:734px" width="16" height="16"><g fill="none" stroke="#6a6a6a" stroke-width="1"><rect x="1.5" y="1.5" width="13" height="13"/><rect x="4.5" y="3.5" width="7" height="9"/><path d="M6 6.5H10M6 8.5H10M6 10.5H10"/></g></svg>
<svg class="a" style="left:991px;top:734px" width="16" height="16"><g fill="none" stroke="#6a6a6a" stroke-width="1"><rect x="1.5" y="1.5" width="13" height="12"/><path d="M5.5 1.5V8.5M9.5 1.5V8.5H1.5"/></g></svg>
<div class="a" style="left:1023px;top:741px;width:6px;height:2px;background:#444"></div>
<div class="a" style="left:1033px;top:742px;width:100px;height:1px;background:#a6a6a6"></div>
<div class="a" style="left:1081px;top:736px;width:5px;height:11px;background:#666"></div>
<div class="a" style="left:1136px;top:741px;width:8px;height:2px;background:#444"></div>
<div class="a" style="left:1139px;top:738px;width:2px;height:8px;background:#444"></div>
<div class="t" style="left:1155px;top:736px;font-size:11.5px;color:#262626;letter-spacing:-0.2px">100 %</div>
<!-- query pane -->
<div class="t" style="left:1002px;top:221px;font-size:20px;color:#2f8070">Запросы и ...</div>
<div class="a" style="left:1133px;top:225px;width:0;height:0;border-left:5px solid transparent;border-right:5px solid transparent;border-top:5px solid #666"></div>
<svg class="a" style="left:1173px;top:220px" width="14" height="14"><path d="M2 2L12 12M12 2L2 12" stroke="#555" stroke-width="2"/></svg>
<div class="t" style="left:1002px;top:259px;font-size:11.5px;color:#444;font-weight:bold">Запросы</div>
<div class="a" style="left:1059px;top:255px;width:1px;height:18px;background:#bdbdbd"></div>
<div class="t" style="left:1069px;top:258px;font-size:12.5px;color:#444">Подключения</div>
<div class="t" style="left:1002px;top:290px;font-size:11px;color:#555">1 запрос</div>
<div class="a" style="left:1002px;top:304px;width:188px;height:1px;background:#b8b8b8"></div>
<div class="a" style="left:1002px;top:313px;width:188px;height:50px;background:#a0d5b6"></div>
<svg class="a" style="left:1007px;top:320px" width="14" height="13"><rect x="0.5" y="0.5" width="12" height="11" fill="#fff" stroke="#666"/><rect x="0.5" y="0.5" width="12" height="2.5" fill="#666"/><path d="M0.5 6H12.5M0.5 9H12.5M4.5 3V11.5M8.5 3V11.5" stroke="#888"/></svg>
<div class="t" style="left:1026px;top:319px;font-size:14.5px;color:#444">Обезличивание пример</div>
<div class="t" style="left:1026px;top:342px;font-size:13px;color:#333">Загружено строк: 8.</div>
<div class="a" style="left:1002px;top:700px;width:188px;height:17px;background:#f0f0f0"></div>
<div class="a" style="left:1036px;top:701px;width:83px;height:15px;background:#c8c8c8"></div>
<svg class="a" style="left:1017px;top:702px" width="12" height="12"><path d="M8 1L3 6L8 11" stroke="#444" stroke-width="2" fill="none"/></svg>
<svg class="a" style="left:1162px;top:702px" width="12" height="12"><path d="M4 1L9 6L4 11" stroke="#444" stroke-width="2" fill="none"/></svg>
<div class="a" style="left:91px;top:696px;width:83px;height:38px;border:3px solid #1c64e3"></div>

<!--/BOTTOM-->
<div id="lb" class="a"></div><div id="rb" class="a"></div><div id="bb" class="a"></div>
</body></html>
